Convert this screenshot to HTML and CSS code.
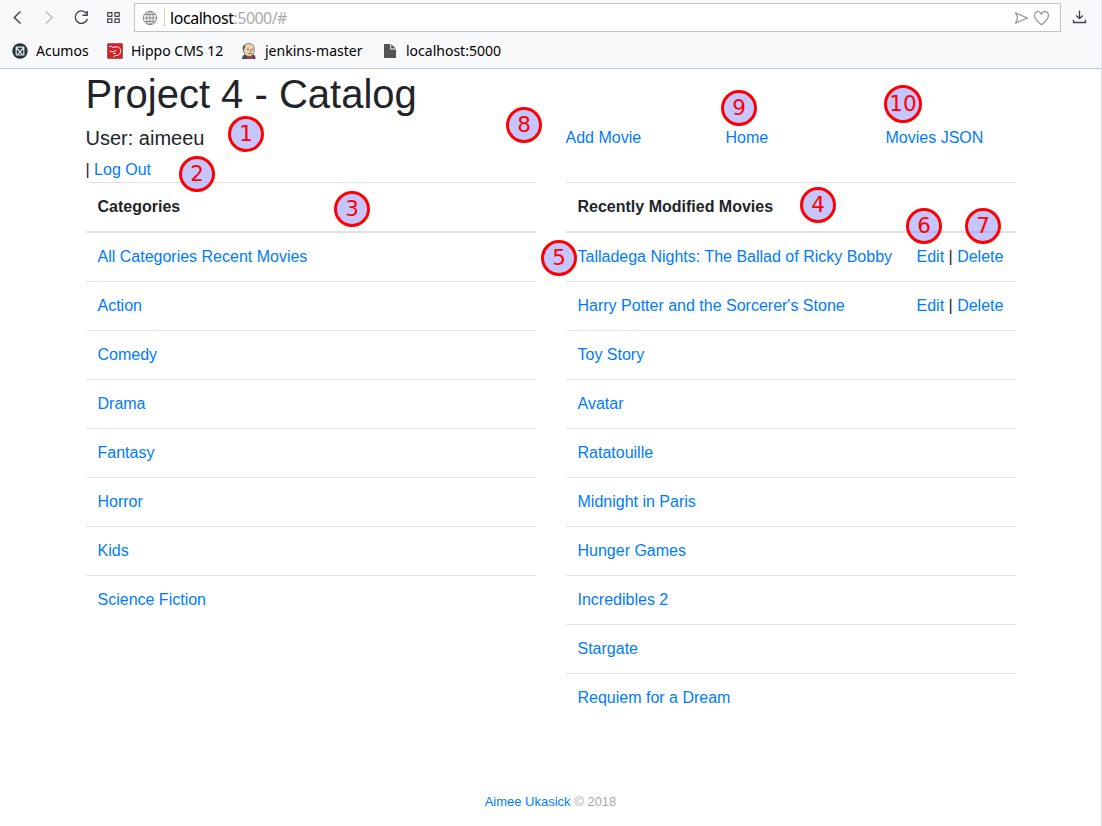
FILE: index.html
```html
<!DOCTYPE html>
<html lang="en">
<head>
<meta charset="utf-8">
<title>Project 4 - Catalog</title>
<link rel="stylesheet" href="styles.css">
</head>
<body>
<div class="window">
  <header class="browser">
    <div class="toolbar">
      <div class="nav-icons">
        <svg width="126" height="32" viewBox="0 0 126 32" fill="none" stroke="#3e4145" stroke-width="1.4">
          <path d="M20.5 11.5L14.3 17.5L20.5 23.5"/>
          <path d="M46 11.5L52.2 17.5L46 23.5" stroke="#b9bcc0"/>
          <path d="M86.3 13.2A6.2 6.2 0 1 0 87.4 19M87.2 11V15.3H82.5"/>
          <path d="M107.7 12.7h4.2v3.6h-4.2zM115 12.7h4.2v3.6H115zM107.7 18.9h4.2v3.6h-4.2zM115 18.9h4.2v3.6H115z" stroke-width="1.2" stroke-linejoin="round"/>
        </svg>
      </div>
      <div class="address">
        <svg class="globe" width="16" height="16" viewBox="0 0 16 16" fill="none" stroke="#85888c">
          <circle cx="8" cy="8" r="6.7"/><ellipse cx="8" cy="8" rx="3.2" ry="6.7"/><path d="M8 1.3v13.4M1.3 8h13.4M2.3 4.6h11.4M2.3 11.4h11.4"/>
        </svg>
        <span class="separator"></span>
        <span class="url"><span class="host">localhost</span><span class="path">:5000/#</span></span>
        <svg class="address-actions" width="38" height="18" viewBox="0 0 38 18" fill="none" stroke="#929292" stroke-width="1.2">
          <path d="M1.7 4L13.4 9L1.7 14L3.7 9Z"/>
          <path d="M27.5 15.7C24 13 20.6 10 20.6 6.5C20.6 4 22.2 2.6 24.1 2.6C25.7 2.6 26.9 3.5 27.5 5C28.1 3.5 29.3 2.6 30.9 2.6C32.8 2.6 34.4 4 34.4 6.5C34.4 10 31 13 27.5 15.7Z"/>
        </svg>
      </div>
      <svg class="download" width="15" height="16" viewBox="0 0 15 16" fill="none" stroke="#3e4145" stroke-width="1.3">
        <path d="M7.5 1.5v8M4.2 6.5l3.3 3.2 3.3-3.2M1.5 10.8v2.7h12v-2.7"/>
      </svg>
    </div>
    <div class="bookmarks">
      <svg width="16" height="16" viewBox="0 0 16 16"><circle cx="8" cy="8" r="7.7" fill="#263238"/><path d="M4.2 12V4.2H11.8V12H4.2M4.5 5L8 8.7L11.5 5M5.5 11.8L8 8.7L10.5 11.8" fill="none" stroke="#e2e7e9" stroke-width="1.2"/></svg>
      <span class="label acumos">Acumos</span>
      <svg width="16" height="16" viewBox="0 0 16 16"><rect x=".4" y=".4" width="15.2" height="15.2" rx="1" fill="#d42027" stroke="#9c4547" stroke-width=".8"/><path d="M2.3 3.8L4 3.1L5.5 4.3L9.5 3.8C13 4 14 6.5 13.5 9C13 11.8 10.8 12.8 8.5 12.5L6.5 14M2.8 8.4L6.5 8.8L9.3 7.2M6 10.5L8.8 10.2" fill="none" stroke="#fff" stroke-width="1"/></svg>
      <span class="label hippo">Hippo CMS 12</span>
      <svg width="16" height="16" viewBox="0 0 16 16"><path d="M.8 16L2 12.5L5.5 11H11L14 12.8L14.7 16Z" fill="#355062"/><path d="M2.8 9C1 4 3.5 .5 8 .5C12.5 .5 14.3 4 13 9C12.5 12 10.5 13.4 8.2 13.4C5.5 13.4 3.6 12 2.8 9Z" fill="#ecd0b0" stroke="#5a4a40" stroke-width=".6"/><path d="M2.7 9.2C1 6 1.5 2.5 4.4 1.2L4 5L2.9 6.2Z" fill="#685b52"/><path d="M6 6.3h2M10.2 6.3h2M7.4 10.8q1.8-1 3.6 0M9.7 7v1.8" fill="none" stroke="#5a4a40" stroke-width=".8"/><path d="M5.8 13l3 1 3.2-1v3l-3.2-.8-3 .8z" fill="#d13438"/></svg>
      <span class="label jenkins">jenkins-master</span>
      <svg width="16" height="16" viewBox="0 0 16 16"><path d="M2 1H8.2V6.4H14V15H2ZM9.2 1.2L13.8 5.4H9.2Z" fill="#555"/></svg>
      <span class="label local">localhost:5000</span>
    </div>
  </header>

  <main class="container">
    <h1>Project 4 - Catalog</h1>
    <div class="row">
      <section class="col"><h5>User: aimeeu</h5><div>| <a>Log Out</a></div></section>
      <nav class="col links"><a>Add Movie</a><a>Home</a><a>Movies JSON</a></nav>
    </div>
    <div class="row">
      <table class="table">
        <thead><tr><th>Categories</th></tr></thead>
        <tbody>
          <tr><td><a>All Categories Recent Movies</a></td></tr>
          <tr><td><a>Action</a></td></tr>
          <tr><td><a>Comedy</a></td></tr>
          <tr><td><a>Drama</a></td></tr>
          <tr><td><a>Fantasy</a></td></tr>
          <tr><td><a>Horror</a></td></tr>
          <tr><td><a>Kids</a></td></tr>
          <tr><td><a>Science Fiction</a></td></tr>
        </tbody>
      </table>
      <table class="table">
        <thead><tr><th>Recently Modified Movies</th><th class="actions"></th></tr></thead>
        <tbody>
          <tr><td><a>Talladega Nights: The Ballad of Ricky Bobby</a></td><td><a>Edit</a> | <a>Delete</a></td></tr>
          <tr><td><a>Harry Potter and the Sorcerer's Stone</a></td><td><a>Edit</a> | <a>Delete</a></td></tr>
          <tr><td><a>Toy Story</a></td><td></td></tr>
          <tr><td><a>Avatar</a></td><td></td></tr>
          <tr><td><a>Ratatouille</a></td><td></td></tr>
          <tr><td><a>Midnight in Paris</a></td><td></td></tr>
          <tr><td><a>Hunger Games</a></td><td></td></tr>
          <tr><td><a>Incredibles 2</a></td><td></td></tr>
          <tr><td><a>Stargate</a></td><td></td></tr>
          <tr><td><a>Requiem for a Dream</a></td><td></td></tr>
        </tbody>
      </table>
    </div>
  </main>
  <footer><a>Aimee Ukasick</a> © 2018</footer>

  <div class="marker m1">1</div>
  <div class="marker m2">2</div>
  <div class="marker m3">3</div>
  <div class="marker m4">4</div>
  <div class="marker m5">5</div>
  <div class="marker m6">6</div>
  <div class="marker m7">7</div>
  <div class="marker m8">8</div>
  <div class="marker m9">9</div>
  <div class="marker m10">10</div>
</div>
</body>
</html>
```
FILE: styles.css
```css
* { box-sizing: border-box; }
body { margin: 0; background: #fff; color: #212529; font: 16px/24px "Liberation Sans", Arial, sans-serif; }
a { color: #007bff; }
svg { display: block; flex: none; }
.window { position: relative; height: 826px; overflow: hidden; border-right: 1px solid #dfe1e8; display: flex; flex-direction: column; }

.browser { height: 69px; flex: none; background: #f8f9fb; border-bottom: 1px solid #c5c8cc; font-family: "Noto Sans", "Open Sans", sans-serif; color: #000; }
.toolbar { display: flex; height: 34px; }
.nav-icons { width: 134px; }
.address { display: flex; align-items: center; width: 927px; height: 29px; margin-top: 3px; padding: 0 8px 0 7px; border: 1px solid #c3c5c9; background: #fff; }
.separator { width: 1px; height: 19px; margin: 0 5px 0 6px; background: #cfd1d3; }
.url { flex: 1; font-size: 16px; white-space: nowrap; }
.host { letter-spacing: -.45px; }
.path { color: #aaa; letter-spacing: -.55px; }
.download { margin: 9px 0 0 11px; }
.bookmarks { display: flex; align-items: center; height: 34px; padding-left: 12px; font-size: 14px; white-space: nowrap; }
.label { margin-left: 8px; }
.acumos { width: 71px; }
.hippo { width: 110px; }
.jenkins { width: 117px; }

.container { width: 930px; margin: 1px auto 0; }
h1 { margin: 0 0 8px; font-size: 40px; font-weight: 400; line-height: 48px; }
h5 { margin: 0 0 8px; font-size: 20px; font-weight: 400; line-height: 24px; }
.row { display: grid; grid-template-columns: 450px 450px; gap: 30px; align-items: start; }
.links { display: grid; grid-template-columns: 160px 160px 130px; }
.table { width: 450px; border-spacing: 0; table-layout: fixed; }
th, td { height: 49px; padding: 12px; border-top: 1px solid #dee2e6; text-align: left; white-space: nowrap; }
th { height: 51px; border-bottom: 2px solid #dee2e6; }
tbody tr:first-child td { height: 48px; border-top: 0; }
.actions { width: 111px; }
footer { margin-top: auto; padding-bottom: 12px; text-align: center; font-size: 13px; color: #aaa; }

/* Numbered annotations laid over the page */
.marker { position: absolute; display: flex; align-items: center; justify-content: center; width: 36px; height: 36px; border: 3px solid #f00; border-radius: 50%; background: rgba(127, 127, 255, .45); color: #f00; font: 21.5px/30px "DejaVu Sans", sans-serif; }
.m1 { left: 228px; top: 116px; }
.m2 { left: 179px; top: 156px; }
.m3 { left: 334px; top: 191px; }
.m4 { left: 800px; top: 187px; }
.m5 { left: 541px; top: 240px; }
.m6 { left: 906px; top: 208px; }
.m7 { left: 965px; top: 208px; }
.m8 { left: 506px; top: 107px; }
.m9 { left: 721px; top: 90px; }
.m10 { left: 884px; top: 85px; width: 38px; height: 38px; }
```
